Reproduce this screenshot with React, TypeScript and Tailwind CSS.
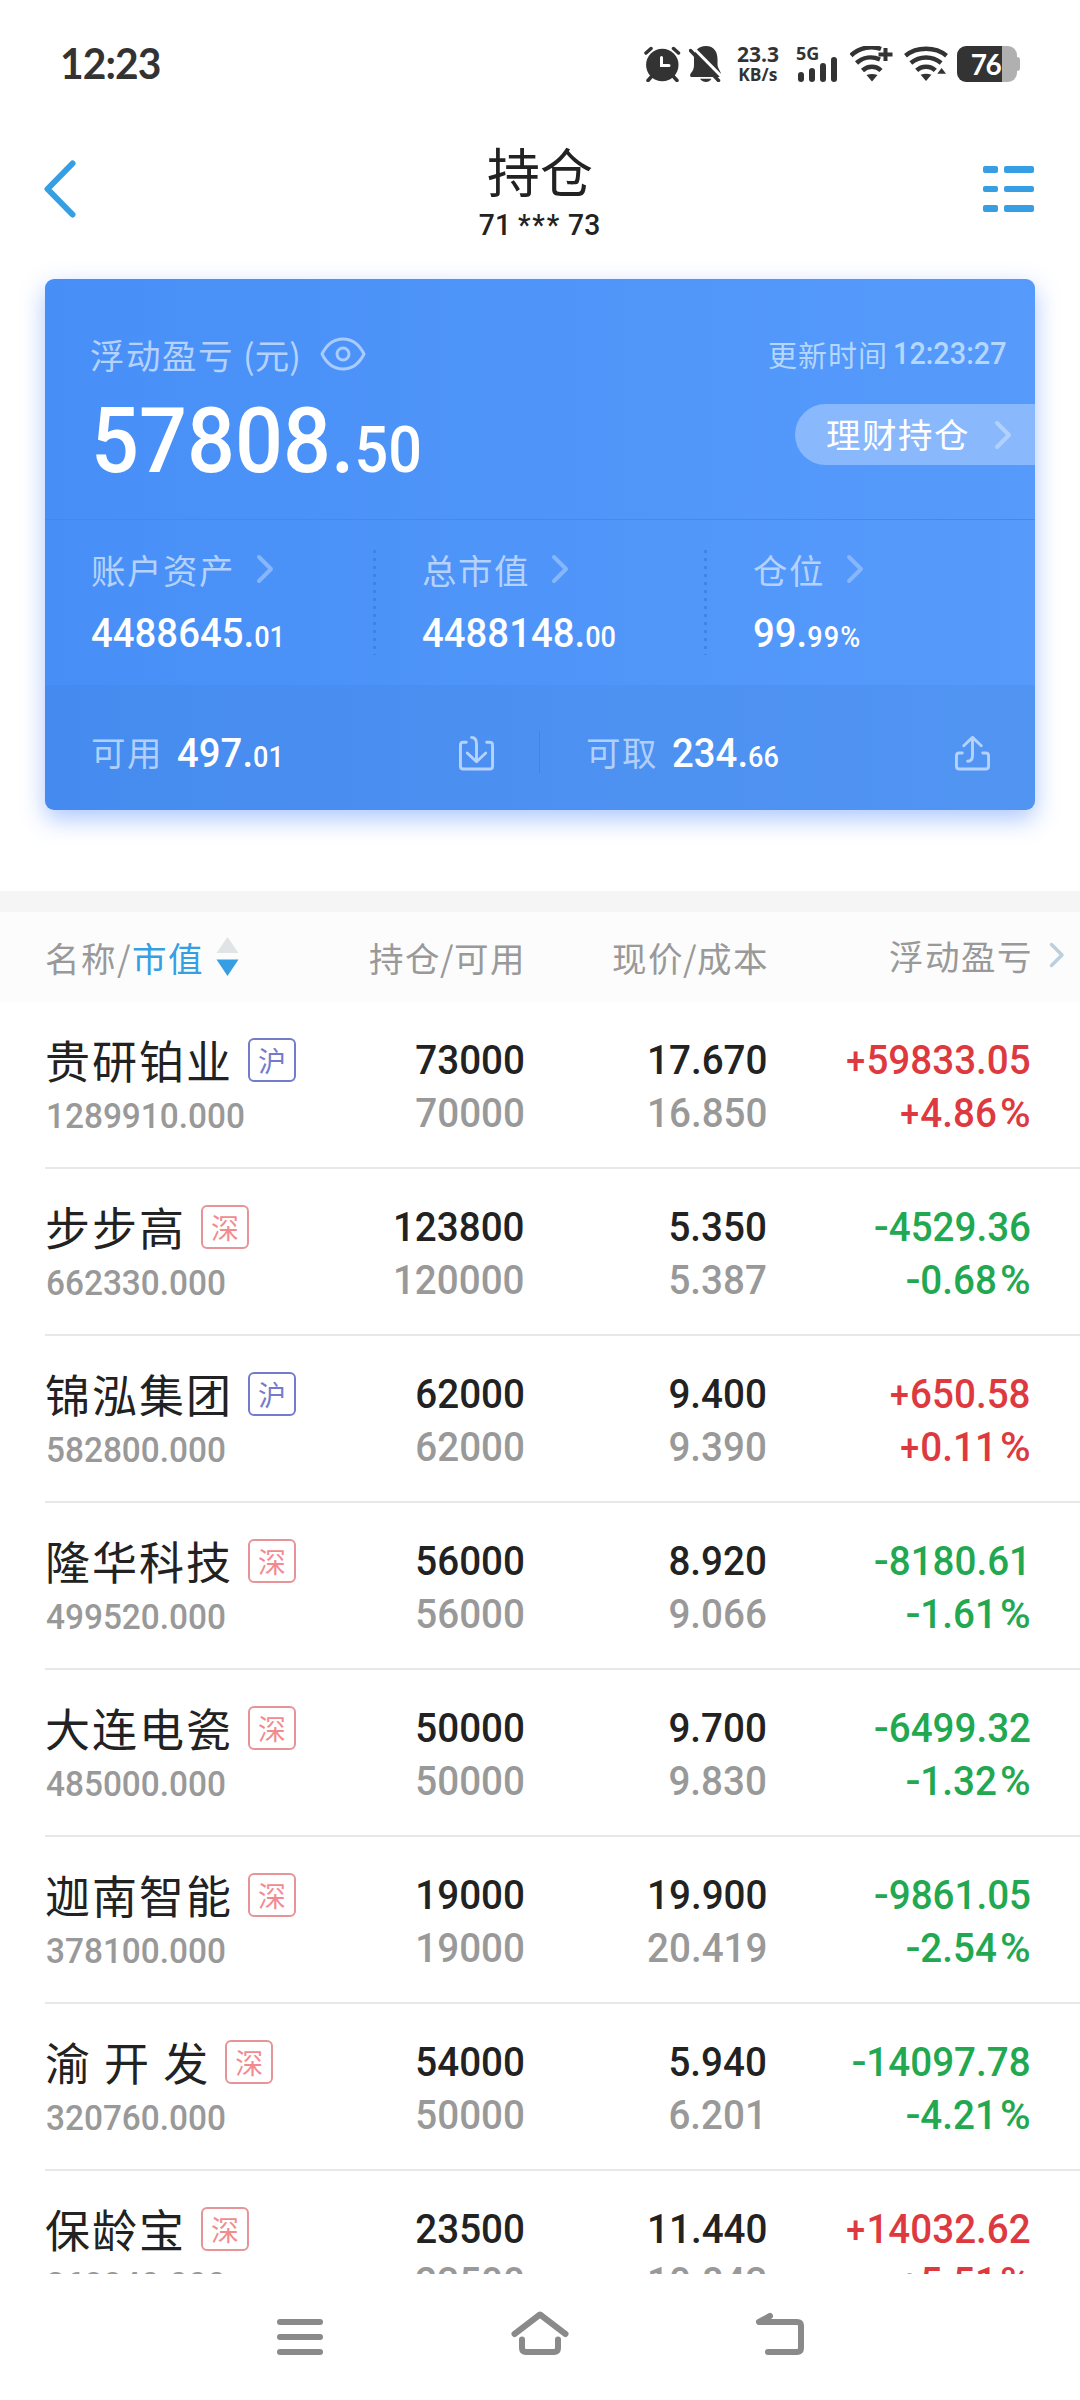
import React from "react";

type Holding = {
  name: string;
  market: "沪" | "深";
  value: string;
  amount: string;
  available: string;
  price: string;
  cost: string;
  profit: string;
  percent: string;
};

const holdings: Holding[] = [
  { name: "贵研铂业", market: "沪", value: "1289910.000", amount: "73000", available: "70000", price: "17.670", cost: "16.850", profit: "+59833.05", percent: "+4.86%" },
  { name: "步步高", market: "深", value: "662330.000", amount: "123800", available: "120000", price: "5.350", cost: "5.387", profit: "-4529.36", percent: "-0.68%" },
  { name: "锦泓集团", market: "沪", value: "582800.000", amount: "62000", available: "62000", price: "9.400", cost: "9.390", profit: "+650.58", percent: "+0.11%" },
  { name: "隆华科技", market: "深", value: "499520.000", amount: "56000", available: "56000", price: "8.920", cost: "9.066", profit: "-8180.61", percent: "-1.61%" },
  { name: "大连电瓷", market: "深", value: "485000.000", amount: "50000", available: "50000", price: "9.700", cost: "9.830", profit: "-6499.32", percent: "-1.32%" },
  { name: "迦南智能", market: "深", value: "378100.000", amount: "19000", available: "19000", price: "19.900", cost: "20.419", profit: "-9861.05", percent: "-2.54%" },
  { name: "渝 开 发", market: "深", value: "320760.000", amount: "54000", available: "50000", price: "5.940", cost: "6.201", profit: "-14097.78", percent: "-4.21%" },
  { name: "保龄宝", market: "深", value: "268840.000", amount: "23500", available: "23500", price: "11.440", cost: "10.843", profit: "+14032.62", percent: "+5.51%" },
];

const digits = "inline-block whitespace-nowrap font-['Roboto',sans-serif] font-medium";
const label = "font-['Noto_Sans_CJK_SC',sans-serif] text-[34.500px] leading-[50px] tracking-[1.500px] whitespace-nowrap";

function Chevron({ className }: { className: string }) {
  return (
    <svg viewBox="0 0 18 30" className={className} fill="none" stroke="currentColor" strokeWidth="4" strokeLinecap="round" strokeLinejoin="round">
      <path d="M3 3 L15 15 L3 27" />
    </svg>
  );
}

function Amount({ whole, fraction }: { whole: string; fraction: string }) {
  return (
    <span className={`${digits} origin-left scale-x-[.935] text-[41px] leading-[48px] text-white`}>
      {whole}.<span className={fraction.endsWith("%") ? "text-[29px] tracking-[1.200px]" : "text-[29px]"}>{fraction}</span>
    </span>
  );
}

function Signed({ text }: { text: string }) {
  const negative = text.startsWith("-");
  const body = text.slice(1).replace("%", "");
  return (
    <span className={`${digits} origin-right scale-x-[.93] text-[41.5px] leading-[53px] ${negative ? "text-[#22a850]" : "text-[#dd393f]"}`}>
      {negative ? (
        <span className="mr-px inline-block w-[15px] origin-left scale-x-[1.15]">-</span>
      ) : (
        <span className="inline-block translate-y-[2px] scale-[.88]">+</span>
      )}
      {body}
      {text.endsWith("%") ? <span className="ml-[6px] inline-block origin-right scale-x-[1.08]">%</span> : null}
    </span>
  );
}

function StatusBar() {
  return (
    <header className="flex h-[128px] items-start justify-between pl-[60px] pr-[60px]">
      <span className="mt-[36px] inline-block origin-left scale-x-[.96] font-['Lato',sans-serif] text-[42.500px] font-bold leading-[54px] tracking-[-1px] text-[#333]">12:23</span>
      <div className="mt-[46px] flex h-[36px] items-start text-[#333]">
        <svg className="h-[36px] w-[37px]" viewBox="0 0 37 36" fill="none" stroke="currentColor" strokeLinecap="round">
          <circle cx="18.300" cy="19" r="16.200" fill="currentColor" stroke="none" />
          <path d="M2 7 L7 2.500 M34.500 7 L29.500 2.500" strokeWidth="3.500" />
          <path d="M8 30 L4 34.500 M29 30 L33 34.500" strokeWidth="3.500" />
          <path d="M17.500 11.500 V19.500 H25" stroke="#fff" strokeWidth="3" />
        </svg>
        <svg className="ml-[8px] h-[36px] w-[34px]" viewBox="0 0 34 36">
          <path d="M17 0 C25 0 28.500 6 28.500 13 V18 C28.500 23 32 25 32 28.500 C32 30 31 31 29.500 31 H3 C1 31 .5 29 2 27 C4.500 24 5 22 5 18 V12 C5 5 9 0 17 0Z" fill="currentColor" />
          <path d="M11 32.800 H22.500 C21 35.200 19 36 17 36 C15 36 12.500 35.200 11 32.800Z" fill="currentColor" />
          <path d="M4 1.500 L34 32" stroke="#fff" strokeWidth="3" />
          <path d="M1.500 4.500 L29.500 34.500" stroke="currentColor" strokeWidth="3.500" strokeLinecap="round" />
        </svg>
        <div className="ml-[11px] flex w-[48px] flex-col items-center font-['Open_Sans',sans-serif] font-bold">
          <span className="-mt-px text-[21px] leading-[19px]">23.3</span>
          <span className="scale-x-[.94] text-[18.500px] leading-[19px]">KB/s</span>
        </div>
        <div className="ml-[14px] flex w-[43px] flex-col">
          <span className="h-[12px] font-['Open_Sans',sans-serif] text-[18px] font-bold leading-[14px]">5G</span>
          <div className="-mt-px flex h-[25px] items-end gap-[5px] pl-[2px]">
            <i className="h-[10px] w-[6px] rounded-[3px] bg-current" />
            <i className="h-[14px] w-[6px] rounded-[3px] bg-current" />
            <i className="h-[19px] w-[6px] rounded-[3px] bg-current" />
            <i className="h-[25px] w-[6px] rounded-[3px] bg-current" />
          </div>
        </div>
        <svg className="ml-[11px] h-[36px] w-[44px]" viewBox="0 0 44 36" fill="none" stroke="currentColor" strokeWidth="4.500" strokeLinecap="butt">
          <path d="M1 9.500 C10 1 22 -.5 31 3" />
          <path d="M6.500 17 C13 11 22 10 30 13.500" />
          <path d="M12.500 24.500 C18 19.500 26 19.500 31 24.500" />
          <path d="M22 35.500 L16.500 29 Q22 27 27.500 29Z" fill="currentColor" stroke="none" />
          <path d="M35.500 2 V15 M28.500 8.500 H42.500" strokeWidth="4" />
        </svg>
        <svg className="ml-[10px] h-[36px] w-[44px]" viewBox="0 0 45 36" fill="none" stroke="currentColor" strokeWidth="4.500" strokeLinecap="butt">
          <path d="M1.500 9.500 C13 0 32 0 43.500 9.500" />
          <path d="M7 17 C16 9.500 29 9.500 38 17" />
          <path d="M13 24.500 C18 19.500 27 19.500 32 24.500" />
          <path d="M22.500 35.500 L17 29 Q22.500 27 28 29Z" fill="currentColor" stroke="none" />
          <path d="M34 28 L38.500 22 L43 28Z" fill="currentColor" stroke="none" />
        </svg>
        <div className="ml-[9px] flex items-center">
          <div className="flex h-[36px] w-[60px] items-center justify-center overflow-hidden rounded-[9px] bg-[linear-gradient(90deg,#333_45px,#b0b0b0_45px)]">
            <span className="-ml-[3px] font-['Lato',sans-serif] text-[28px] font-bold leading-[36px] tracking-[-1.500px] text-white">76</span>
          </div>
          <i className="h-[14px] w-[3px] rounded-r-[3px] bg-[#b0b0b0]" />
        </div>
      </div>
    </header>
  );
}

function TitleBar() {
  return (
    <div className="grid h-[151px] grid-cols-[1fr_auto_1fr] items-start text-[#222]">
      <svg className="ml-[43px] mt-[32px] h-[58px] w-[33px]" viewBox="0 0 33 58" fill="none" stroke="#369ee3" strokeWidth="6" strokeLinejoin="round">
        <path d="M29.500 3.500 L4.500 29 L29.500 54.500" strokeLinecap="round" />
      </svg>
      <div className="flex flex-col items-center">
        <h1 className="mt-[12px] font-['Noto_Sans_CJK_SC',sans-serif] text-[53px] font-normal leading-[60px]">持仓</h1>
        <span className={`${digits} mt-[7px] scale-x-[.94] text-[30px] leading-[36px]`}>
          71 <span className="tracking-[2px]">***</span> 73
        </span>
      </div>
      <div className="mr-[46px] mt-[38px] flex flex-col gap-[13px] justify-self-end">
        {[0, 1, 2].map((i) => (
          <div key={i} className="flex gap-[6px]">
            <i className="h-[6.500px] w-[15px] rounded-[2px] bg-[#369ee3]" />
            <i className="h-[6.500px] w-[30px] rounded-[2px] bg-[#369ee3]" />
          </div>
        ))}
      </div>
    </div>
  );
}

const stats = [
  { label: "账户资产", whole: "4488645", fraction: "01" },
  { label: "总市值", whole: "4488148", fraction: "00" },
  { label: "仓位", whole: "99", fraction: "99%" },
];

function SummaryCard() {
  return (
    <section className="mx-[45px] flex h-[531px] flex-col rounded-[9px] bg-[linear-gradient(90deg,#478ff7,#4f95f9_50%,#569bfb)] shadow-[0_9px_24px_rgba(70,130,255,0.45)]">
      <div className="flex h-[241px] justify-between border-b border-[#438ae9]">
        <div className="pl-[45px]">
          <div className="mt-[49px] flex h-[52px] items-center">
            <span className={`${label} text-[#b5d2fd]`}>浮动盈亏</span>
            <span className="ml-[9px] flex font-['Noto_Sans_CJK_SC',sans-serif] text-[34.500px] leading-[50px] text-[#b5d2fd]">
              <span>(</span>元<span>)</span>
            </span>
            <svg className="ml-[19px] h-[34px] w-[46px]" viewBox="0 0 46 34" fill="none" stroke="#a9cbfd" strokeWidth="3">
              <path d="M2 17 C12 -3 34 -3 44 17 C34 37 12 37 2 17Z" strokeLinejoin="round" />
              <circle cx="23" cy="17" r="6" />
            </svg>
          </div>
          <span className={`${digits} ml-px mt-[11px] origin-left scale-x-[.928] text-[91px] leading-[100px] text-white`}>
            57808.<span className="text-[64px]">50</span>
          </span>
        </div>
        <div className="flex flex-col items-end">
          <div className="mr-[28px] mt-[50px] flex h-[50px] items-center text-[#b5d6fd]">
            <span className="font-['Noto_Sans_CJK_SC',sans-serif] text-[29px] leading-[44px] tracking-[1px]">更新时间</span>
            <span className={`${digits} -mr-[8px] ml-[5px] origin-left scale-x-[.93] text-[31px] leading-[44px]`}>12:23:27</span>
          </div>
          <div className="mt-[25px] flex h-[61px] w-[240px] items-center rounded-l-full bg-[#89b8fd] pl-[31px]">
            <span className="-mt-[3px] font-['Noto_Sans_CJK_SC',sans-serif] text-[34.500px] leading-[50px] tracking-[1.500px] text-white">理财持仓</span>
            <Chevron className="ml-[24px] h-[30px] w-[18px] text-[#b3d1fe]" />
          </div>
        </div>
      </div>
      <div className="flex h-[165px]">
        {stats.map((s, i) => (
          <div key={s.label} className="flex w-[331px] shrink-0 justify-between last:w-[328px]">
            <div className="pl-[46px]">
              <div className="mt-[24px] flex h-[50px] items-center">
                <span className={`${label} text-[#b5d2fd]`}>{s.label}</span>
                <Chevron className="ml-[21px] h-[30px] w-[18px] text-[#87b6fd]" />
              </div>
              <div className="mt-[15px]">
                <Amount whole={s.whole} fraction={s.fraction} />
              </div>
            </div>
            {i < 2 ? <i className="mt-[30px] h-[105px] w-[3px] bg-[repeating-linear-gradient(180deg,#3f83e5_0_3px,transparent_3px_8px)]" /> : null}
          </div>
        ))}
      </div>
      <div className="flex h-[125px] items-center rounded-b-[9px] bg-[#3f7fd0]/20 pt-[9px]">
        <div className="flex h-[42px] w-[495px] items-center border-r border-[#4583e0] pl-[46px] pr-[44px]">
          <span className={`${label} -mt-[2px] text-[#b0cffa]`}>可用</span>
          <span className="ml-[14px] mt-[5px] flex"><Amount whole="497" fraction="01" /></span>
          <svg className="ml-auto mt-px h-[36px] w-[37px]" viewBox="0 0 37 37" fill="none" stroke="#b5d2fd" strokeWidth="3" strokeLinecap="round" strokeLinejoin="round">
            <path d="M8 7.500 H5 Q2 7.500 2 10.500 V32 Q2 35 5 35 H32 Q35 35 35 32 V10.500 Q35 7.500 32 7.500 H29" />
            <path d="M13.500 2.500 Q18.500 2.500 18.500 9 V27 M9 18.500 L18.500 27.500 L28 18.500" />
          </svg>
        </div>
        <div className="flex h-[42px] w-[495px] items-center pl-[46px] pr-[44px]">
          <span className={`${label} -mt-[2px] text-[#b0cffa]`}>可取</span>
          <span className="ml-[14px] mt-[5px] flex"><Amount whole="234" fraction="66" /></span>
          <svg className="ml-auto mt-px h-[36px] w-[37px]" viewBox="0 0 37 37" fill="none" stroke="#b5d2fd" strokeWidth="3" strokeLinecap="round" strokeLinejoin="round">
            <path d="M8 18.500 H5 Q2 18.500 2 21.500 V32 Q2 35 5 35 H32 Q35 35 35 32 V21.500 Q35 18.500 32 18.500 H29" />
            <path d="M13.500 27 Q18.500 27 18.500 21 V3 M9.500 11 L18.500 2.500 L27.500 11" />
          </svg>
        </div>
      </div>
    </section>
  );
}

const columns = "grid grid-cols-[222px_258px_242px_264px_1fr]";

function ListHeader() {
  return (
    <div className={`${columns} h-[90px] shrink-0 items-center bg-[#fcfcfc] pl-[45px] text-[#999] ${label}`}>
      <div className="-mt-px flex items-center">
        <span>名称/</span>
        <span className="text-[#369ee3]">市值</span>
        <svg className="ml-[12px] h-[39px] w-[23px] shrink-0" viewBox="0 0 22 39">
          <path d="M11 0 L22 16 H0Z" fill="#e0e4e6" />
          <path d="M11 39 L22 22.500 H0Z" fill="#369ee3" />
        </svg>
      </div>
      <span className="-mr-px -mt-px text-right">持仓<span className="-ml-px tracking-[.5px]">/</span>可用</span>
      <span className="-mr-[2px] -mt-px text-right">现价<span className="-ml-px tracking-[.5px]">/</span>成本</span>
      <span className="-mr-[2px] -mt-[4px] text-right">浮动盈亏</span>
      <svg className="-mt-[4px] ml-[18px] h-[26px] w-[16px]" viewBox="0 0 16 26" fill="none" stroke="#bccfdd" strokeWidth="3.500" strokeLinecap="round" strokeLinejoin="round">
        <path d="M2.500 2.500 L13 13 L2.500 23.500" />
      </svg>
    </div>
  );
}

function Pair({ top, bottom }: { top: string; bottom: string }) {
  return (
    <div className="flex flex-col items-end pt-[31px]">
      <span className={`${digits} origin-right scale-x-[.93] text-[41.500px] leading-[53px] text-[#222]`}>{top}</span>
      <span className={`${digits} origin-right scale-x-[.93] text-[41.500px] leading-[53px] text-[#999]`}>{bottom}</span>
    </div>
  );
}

function HoldingRow({ item }: { item: Holding }) {
  const tag = item.market === "沪" ? "border-[#757bcb] text-[#757bcb]" : "border-[#e69498] text-[#f28b8f]";
  return (
    <li className="ml-[45px] h-[167px] border-b-2 border-[#e8e8e8]">
      <div className={`${columns} h-[165px]`}>
        <div className="pt-[30px]">
          <div className="flex h-[56px] items-center whitespace-nowrap">
            <span className="font-['Noto_Sans_CJK_SC',sans-serif] text-[45px] leading-[56px] tracking-[2px] text-[#222]">{item.name}</span>
            <span className={`ml-[15px] flex h-[44px] w-[48px] shrink-0 items-center justify-center rounded-[6px] border-2 font-['Noto_Sans_CJK_SC',sans-serif] text-[28px] leading-[36px] ${tag}`}>{item.market}</span>
          </div>
          <span className={`${digits} ml-px mt-[7px] origin-left scale-x-[.94] text-[35.500px] leading-[42px] text-[#999]`}>{item.value}</span>
        </div>
        <Pair top={item.amount} bottom={item.available} />
        <Pair top={item.price} bottom={item.cost} />
        <div className="flex flex-col items-end pt-[31px]">
          <Signed text={item.profit} />
          <Signed text={item.percent} />
        </div>
      </div>
    </li>
  );
}

function NavBar() {
  return (
    <nav className="flex h-[126px] items-start justify-between pl-[277px] pr-[275px] pt-[37px]">
      <div className="mt-[8px] flex w-[46px] flex-col gap-[9px]">
        <i className="h-[6px] rounded-full bg-[#8a8a8a]" />
        <i className="h-[6px] rounded-full bg-[#8a8a8a]" />
        <i className="h-[6px] rounded-full bg-[#8a8a8a]" />
      </div>
      <svg className="ml-[2px] h-[46px] w-[58px]" viewBox="0 0 58 46" fill="none" stroke="#8a8a8a" strokeWidth="6" strokeLinecap="round" strokeLinejoin="round">
        <path d="M3.500 23 L29 3.500 L54.500 23" />
        <path d="M11 28.500 V37 Q11 41 15 41 H43 Q47 41 47 37 V28.500" />
      </svg>
      <svg className="h-[46px] w-[50px]" viewBox="0 0 50 46" fill="none" stroke="#8a8a8a" strokeWidth="6" strokeLinecap="round" strokeLinejoin="round">
        <path d="M15 5 L4 11 H42 Q46 11 46 15 V37 Q46 41 42 41 H13" />
      </svg>
    </nav>
  );
}

export default function App() {
  return (
    <main className="flex h-[2400px] w-[1080px] flex-col overflow-hidden bg-white">
      <StatusBar />
      <TitleBar />
      <SummaryCard />
      <div className="mt-[81px] h-[21px] shrink-0 bg-[#f5f5f5]" />
      <ListHeader />
      <ul className="h-[1272px] shrink-0 overflow-hidden bg-white">
        {holdings.map((h) => (
          <HoldingRow key={h.name} item={h} />
        ))}
      </ul>
      <NavBar />
    </main>
  );
}
